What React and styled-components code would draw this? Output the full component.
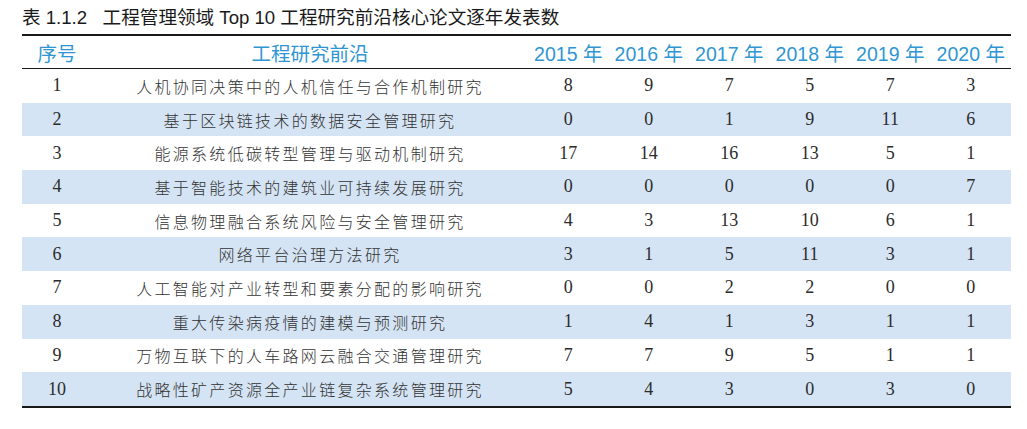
import styled, { createGlobalStyle } from 'styled-components'

const GlobalStyle = createGlobalStyle`
body {
  margin: 0;
  background: #fff;
}
`

const rows = [
  ['1', '人机协同决策中的人机信任与合作机制研究', [8, 9, 7, 5, 7, 3]],
  ['2', '基于区块链技术的数据安全管理研究', [0, 0, 1, 9, 11, 6]],
  ['3', '能源系统低碳转型管理与驱动机制研究', [17, 14, 16, 13, 5, 1]],
  ['4', '基于智能技术的建筑业可持续发展研究', [0, 0, 0, 0, 0, 7]],
  ['5', '信息物理融合系统风险与安全管理研究', [4, 3, 13, 10, 6, 1]],
  ['6', '网络平台治理方法研究', [3, 1, 5, 11, 3, 1]],
  ['7', '人工智能对产业转型和要素分配的影响研究', [0, 0, 2, 2, 0, 0]],
  ['8', '重大传染病疫情的建模与预测研究', [1, 4, 1, 3, 1, 1]],
  ['9', '万物互联下的人车路网云融合交通管理研究', [7, 7, 9, 5, 1, 1]],
  ['10', '战略性矿产资源全产业链复杂系统管理研究', [5, 4, 3, 0, 3, 0]]
]

const years = [2015, 2016, 2017, 2018, 2019, 2020]

const Page = styled.div`
padding: 6px 0 0 22px;
width: 989px;
`

const Title = styled.div`
font-family: "Liberation Sans", "Noto Sans CJK SC", sans-serif;
font-size: 18.6px;
color: #1a1a1a;
line-height: 23px;
margin-bottom: 5px;
white-space: pre;
`

const Table = styled.table`
width: 989px;
border-collapse: collapse;
table-layout: fixed;
border-top: 2px solid #1a1a1a;
border-bottom: 2px solid #1a1a1a;
`

const HeadCell = styled.th`
height: 32px;
padding: 0;
font-family: "Liberation Sans", "Noto Sans CJK SC", sans-serif;
font-weight: normal;
font-size: 19.5px;
color: #2f96d3;
text-align: center;
border-bottom: 1.5px solid #1a1a1a;
white-space: nowrap;
`

const Row = styled.tr`
background: ${(p) => (p.$band ? '#d5e4f4' : '#fff')};
`

const Cell = styled.td`
height: 33.7px;
padding: 0;
text-align: center;
color: #2b2b2b;
font-family: "Liberation Serif", "Noto Sans CJK SC", serif;
font-size: 18px;
`

const TopicCell = styled(Cell)`
font-family: "Noto Sans CJK SC", sans-serif;
font-weight: 300;
font-size: 16px;
letter-spacing: 2.3px;
color: #333;
`

function App() {
  return (
    <Page>
      <GlobalStyle />
      <Title>{'表 1.1.2   工程管理领域 Top 10 工程研究前沿核心论文逐年发表数'}</Title>
      <Table>
        <colgroup>
          <col style={{ width: 70 }} />
          <col style={{ width: 436 }} />
          {years.map((y) => <col key={y} style={{ width: 80.5 }} />)}
        </colgroup>
        <thead>
          <tr>
            <HeadCell>序号</HeadCell>
            <HeadCell>工程研究前沿</HeadCell>
            {years.map((y) => <HeadCell key={y}>{y} 年</HeadCell>)}
          </tr>
        </thead>
        <tbody>
          {rows.map(([no, topic, counts], i) => (
            <Row key={no} $band={i % 2 === 1}>
              <Cell>{no}</Cell>
              <TopicCell>{topic}</TopicCell>
              {counts.map((c, j) => <Cell key={j}>{c}</Cell>)}
            </Row>
          ))}
        </tbody>
      </Table>
    </Page>
  )
}

export default App
